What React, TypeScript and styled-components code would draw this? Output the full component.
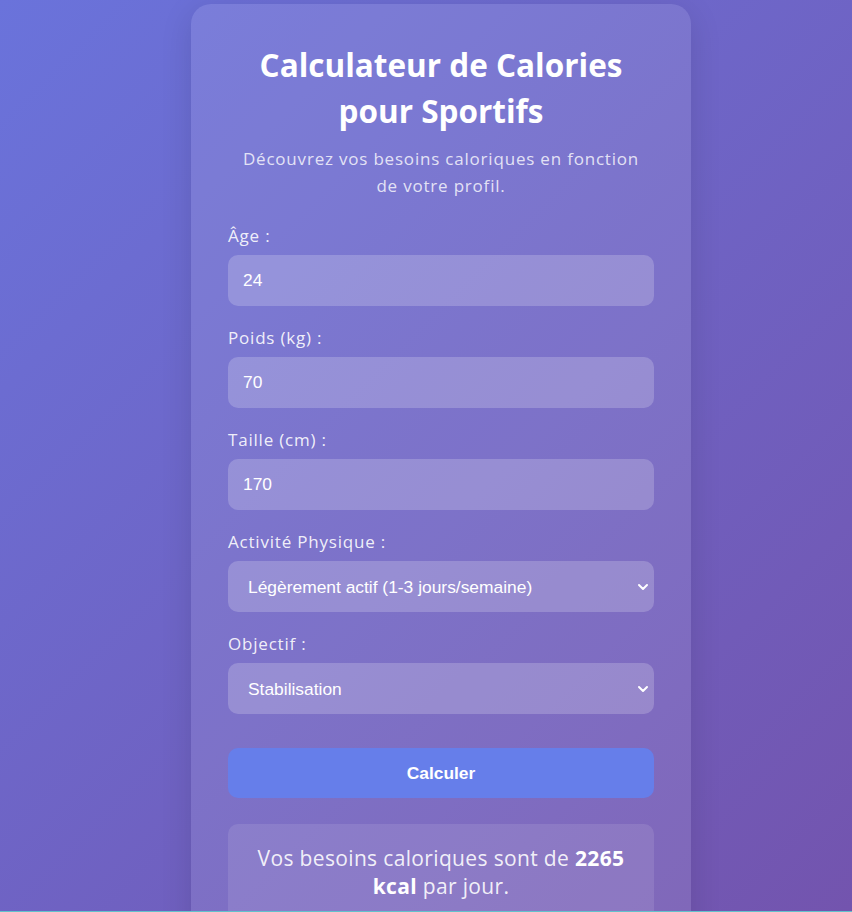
import React from "react";
import styled, { createGlobalStyle } from "styled-components";

const GlobalStyle = createGlobalStyle`
  html {
    background: #62c2cc;
  }
  body {
    margin: 0;
    height: 911px;
    background: linear-gradient(135deg, #6a73db 0%, #7354ae 100%);
    font-family: "Open Sans", "Noto Sans", sans-serif;
    color: #fff;
  }
  * { box-sizing: border-box; }
`;

const Page = styled.div`
  display: flex;
  justify-content: center;
  padding: 4px 0 0 30px;
`;

const Card = styled.div`
  width: 500px;
  padding: 38px 37px 40px;
  border-radius: 20px;
  background: rgba(255, 255, 255, 0.1);
  box-shadow: 0 8px 32px rgba(0, 0, 0, 0.12);
  display: flex;
  flex-direction: column;
`;

const Title = styled.h1`
  margin: 0;
  text-align: center;
  font-size: 31.5px;
  line-height: 46px;
  font-weight: 700;
  color: #fff;
`;

const Subtitle = styled.p`
  margin: 11px 0 25px;
  text-align: center;
  font-size: 17px;
  letter-spacing: 0.8px;
  line-height: 27px;
  color: rgba(255, 255, 255, 0.8);
`;

const Field = styled.div`
  display: flex;
  flex-direction: column;
  gap: 7px;
  margin-bottom: 20px;
`;

const Label = styled.label`
  font-size: 17px;
  letter-spacing: 0.8px;
  line-height: 24px;
  color: rgba(255, 255, 255, 0.9);
`;

const controlBase = `
  width: 100%;
  height: 51px;
  border: none;
  border-radius: 10px;
  background: rgba(255, 255, 255, 0.2);
  color: #fff;
  font-family: "Liberation Sans", Arial, sans-serif;
  font-size: 17.4px;
  letter-spacing: 0;
  outline: none;
`;

const Input = styled.input`
  ${controlBase}
  padding: 0 15px;
`;

const SelectWrap = styled.div`
  position: relative;
`;

const Select = styled.select`
  ${controlBase}
  appearance: none;
  padding: 0 40px 0 20px;
  option { color: #000; }
`;

const Chevron = styled.svg`
  position: absolute;
  right: 5px;
  top: 50%;
  transform: translateY(-50%);
  width: 12px;
  height: 8px;
  pointer-events: none;
`;

const Button = styled.button`
  margin-top: 14px;
  height: 50px;
  border: none;
  border-radius: 10px;
  background: #667eea;
  color: #fff;
  font-family: "Liberation Sans", Arial, sans-serif;
  font-weight: 700;
  font-size: 17.4px;
  cursor: pointer;
`;

const Result = styled.div`
  margin-top: 26px;
  padding: 20px 24px;
  border-radius: 10px;
  background: rgba(255, 255, 255, 0.1);
  text-align: center;
  font-size: 21px;
  letter-spacing: 0.35px;
  line-height: 28px;
  color: rgba(255, 255, 255, 0.9);
  strong { font-weight: 700; color: #fff; }
`;

const ChevronIcon = () => (
  <Chevron viewBox="0 0 12 8" fill="none">
    <path d="M2 2l4 4 4-4" stroke="#fff" strokeWidth="2" strokeLinecap="round" strokeLinejoin="round" />
  </Chevron>
);

export default function App() {
  return (
    <>
      <GlobalStyle />
      <Page>
        <Card>
          <Title>
            Calculateur de Calories
            <br />
            pour Sportifs
          </Title>
          <Subtitle>
            Découvrez vos besoins caloriques en fonction
            <br />
            de votre profil.
          </Subtitle>
          <Field>
            <Label>Âge :</Label>
            <Input type="number" defaultValue="24" />
          </Field>
          <Field>
            <Label>Poids (kg) :</Label>
            <Input type="number" defaultValue="70" />
          </Field>
          <Field>
            <Label>Taille (cm) :</Label>
            <Input type="number" defaultValue="170" />
          </Field>
          <Field>
            <Label>Activité Physique :</Label>
            <SelectWrap>
              <Select defaultValue="light">
                <option value="sedentary">Sédentaire</option>
                <option value="light">Légèrement actif (1-3 jours/semaine)</option>
                <option value="moderate">Modérément actif (3-5 jours/semaine)</option>
                <option value="very">Très actif (6-7 jours/semaine)</option>
              </Select>
              <ChevronIcon />
            </SelectWrap>
          </Field>
          <Field>
            <Label>Objectif :</Label>
            <SelectWrap>
              <Select defaultValue="stab">
                <option value="loss">Perte de poids</option>
                <option value="stab">Stabilisation</option>
                <option value="gain">Prise de masse</option>
              </Select>
              <ChevronIcon />
            </SelectWrap>
          </Field>
          <Button type="button">Calculer</Button>
          <Result>
            Vos besoins caloriques sont de <strong>2265
            <br />
            kcal</strong> par jour.
          </Result>
        </Card>
      </Page>
    </>
  );
}
